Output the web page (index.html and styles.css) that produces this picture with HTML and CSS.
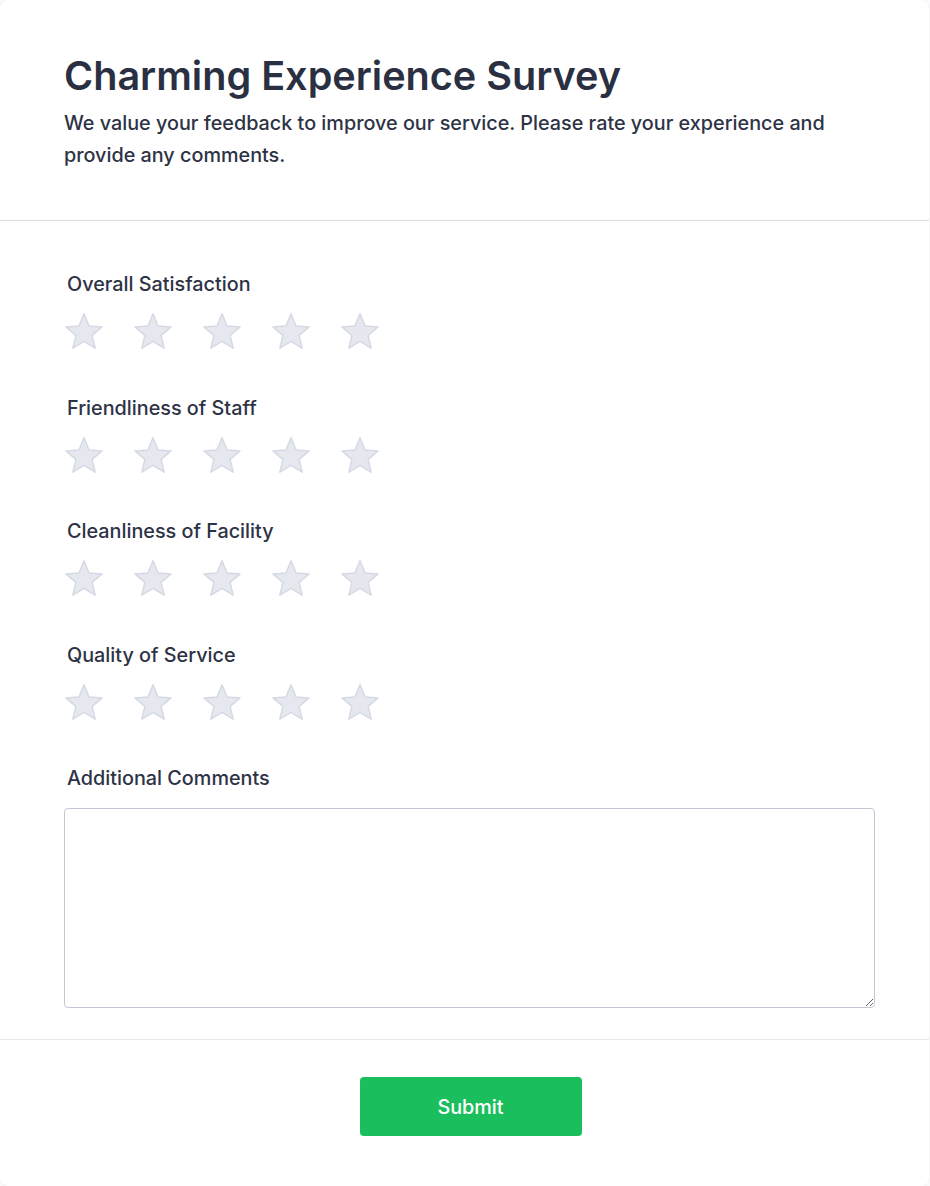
FILE: index.html
```html
<!DOCTYPE html>
<html lang="en">
<head>
<meta charset="utf-8">
<title>Charming Experience Survey</title>
<link rel="stylesheet" href="styles.css">
</head>
<body>
<div class="card">
  <header class="head">
    <h1 class="title">Charming Experience Survey</h1>
    <p class="desc">We value your feedback to improve our service. Please rate your experience and provide any comments.</p>
  </header>
  <main class="body">
    <div class="group">
      <label class="label">Overall Satisfaction</label>
      <div class="stars">
        <svg class="star" viewBox="0 0 40 38"><path d="M20 0.8 L25 12.92 L38.07 13.93 L28.08 22.43 L31.17 35.17 L20 28.3 L8.83 35.17 L11.92 22.43 L1.93 13.93 L15 12.92 Z"/></svg>
        <svg class="star" viewBox="0 0 40 38"><path d="M20 0.8 L25 12.92 L38.07 13.93 L28.08 22.43 L31.17 35.17 L20 28.3 L8.83 35.17 L11.92 22.43 L1.93 13.93 L15 12.92 Z"/></svg>
        <svg class="star" viewBox="0 0 40 38"><path d="M20 0.8 L25 12.92 L38.07 13.93 L28.08 22.43 L31.17 35.17 L20 28.3 L8.83 35.17 L11.92 22.43 L1.93 13.93 L15 12.92 Z"/></svg>
        <svg class="star" viewBox="0 0 40 38"><path d="M20 0.8 L25 12.92 L38.07 13.93 L28.08 22.43 L31.17 35.17 L20 28.3 L8.83 35.17 L11.92 22.43 L1.93 13.93 L15 12.92 Z"/></svg>
        <svg class="star" viewBox="0 0 40 38"><path d="M20 0.8 L25 12.92 L38.07 13.93 L28.08 22.43 L31.17 35.17 L20 28.3 L8.83 35.17 L11.92 22.43 L1.93 13.93 L15 12.92 Z"/></svg>
      </div>
    </div>
    <div class="group">
      <label class="label">Friendliness of Staff</label>
      <div class="stars">
        <svg class="star" viewBox="0 0 40 38"><path d="M20 0.8 L25 12.92 L38.07 13.93 L28.08 22.43 L31.17 35.17 L20 28.3 L8.83 35.17 L11.92 22.43 L1.93 13.93 L15 12.92 Z"/></svg>
        <svg class="star" viewBox="0 0 40 38"><path d="M20 0.8 L25 12.92 L38.07 13.93 L28.08 22.43 L31.17 35.17 L20 28.3 L8.83 35.17 L11.92 22.43 L1.93 13.93 L15 12.92 Z"/></svg>
        <svg class="star" viewBox="0 0 40 38"><path d="M20 0.8 L25 12.92 L38.07 13.93 L28.08 22.43 L31.17 35.17 L20 28.3 L8.83 35.17 L11.92 22.43 L1.93 13.93 L15 12.92 Z"/></svg>
        <svg class="star" viewBox="0 0 40 38"><path d="M20 0.8 L25 12.92 L38.07 13.93 L28.08 22.43 L31.17 35.17 L20 28.3 L8.83 35.17 L11.92 22.43 L1.93 13.93 L15 12.92 Z"/></svg>
        <svg class="star" viewBox="0 0 40 38"><path d="M20 0.8 L25 12.92 L38.07 13.93 L28.08 22.43 L31.17 35.17 L20 28.3 L8.83 35.17 L11.92 22.43 L1.93 13.93 L15 12.92 Z"/></svg>
      </div>
    </div>
    <div class="group">
      <label class="label">Cleanliness of Facility</label>
      <div class="stars">
        <svg class="star" viewBox="0 0 40 38"><path d="M20 0.8 L25 12.92 L38.07 13.93 L28.08 22.43 L31.17 35.17 L20 28.3 L8.83 35.17 L11.92 22.43 L1.93 13.93 L15 12.92 Z"/></svg>
        <svg class="star" viewBox="0 0 40 38"><path d="M20 0.8 L25 12.92 L38.07 13.93 L28.08 22.43 L31.17 35.17 L20 28.3 L8.83 35.17 L11.92 22.43 L1.93 13.93 L15 12.92 Z"/></svg>
        <svg class="star" viewBox="0 0 40 38"><path d="M20 0.8 L25 12.92 L38.07 13.93 L28.08 22.43 L31.17 35.17 L20 28.3 L8.83 35.17 L11.92 22.43 L1.93 13.93 L15 12.92 Z"/></svg>
        <svg class="star" viewBox="0 0 40 38"><path d="M20 0.8 L25 12.92 L38.07 13.93 L28.08 22.43 L31.17 35.17 L20 28.3 L8.83 35.17 L11.92 22.43 L1.93 13.93 L15 12.92 Z"/></svg>
        <svg class="star" viewBox="0 0 40 38"><path d="M20 0.8 L25 12.92 L38.07 13.93 L28.08 22.43 L31.17 35.17 L20 28.3 L8.83 35.17 L11.92 22.43 L1.93 13.93 L15 12.92 Z"/></svg>
      </div>
    </div>
    <div class="group">
      <label class="label">Quality of Service</label>
      <div class="stars">
        <svg class="star" viewBox="0 0 40 38"><path d="M20 0.8 L25 12.92 L38.07 13.93 L28.08 22.43 L31.17 35.17 L20 28.3 L8.83 35.17 L11.92 22.43 L1.93 13.93 L15 12.92 Z"/></svg>
        <svg class="star" viewBox="0 0 40 38"><path d="M20 0.8 L25 12.92 L38.07 13.93 L28.08 22.43 L31.17 35.17 L20 28.3 L8.83 35.17 L11.92 22.43 L1.93 13.93 L15 12.92 Z"/></svg>
        <svg class="star" viewBox="0 0 40 38"><path d="M20 0.8 L25 12.92 L38.07 13.93 L28.08 22.43 L31.17 35.17 L20 28.3 L8.83 35.17 L11.92 22.43 L1.93 13.93 L15 12.92 Z"/></svg>
        <svg class="star" viewBox="0 0 40 38"><path d="M20 0.8 L25 12.92 L38.07 13.93 L28.08 22.43 L31.17 35.17 L20 28.3 L8.83 35.17 L11.92 22.43 L1.93 13.93 L15 12.92 Z"/></svg>
        <svg class="star" viewBox="0 0 40 38"><path d="M20 0.8 L25 12.92 L38.07 13.93 L28.08 22.43 L31.17 35.17 L20 28.3 L8.83 35.17 L11.92 22.43 L1.93 13.93 L15 12.92 Z"/></svg>
      </div>
    </div>
    <div class="group">
      <label class="label label-comments" for="comments">Additional Comments</label>
      <textarea id="comments" class="comments"></textarea>
    </div>
  </main>
  <footer class="foot">
    <button class="submit" type="button">Submit</button>
  </footer>
</div>
</body>
</html>
```
FILE: styles.css
```css
* { box-sizing: border-box; }
html, body { margin: 0; padding: 0; background: #fbfbfd; }
body {
  font-family: Inter, "Noto Sans", "Liberation Sans", sans-serif;
  color: #2d3345;
}
.card {
  width: 929px;
  min-height: 1186px;
  background: #ffffff;
  border-radius: 8px;
  box-shadow: 0 0 2px rgba(40, 40, 80, 0.10);
}
.head {
  padding: 56px 54px 49px 64px;
  border-bottom: 1px solid #dedee9;
}
.title {
  margin: 0;
  font-size: 39.6px;
  line-height: 40px;
  font-weight: 600;
  color: #2a3042;
}
.desc {
  margin: 11px 0 0;
  font-size: 19.8px;
  line-height: 32px;
  font-weight: 500;
  color: #2d3345;
}
.body {
  padding: 49px 54px 31px 64px;
  display: flex;
  flex-direction: column;
  gap: 42.5px;
  border-bottom: 1px solid #e6e6ee;
}
.group {
  display: flex;
  flex-direction: column;
}
.label {
  display: block;
  margin-left: 3px;
  font-size: 19.8px;
  line-height: 28px;
  font-weight: 500;
  color: #2d3345;
  margin-bottom: 15px;
}
.label-comments { margin-bottom: 16px; }
.stars {
  display: flex;
  gap: 29px;
  height: 38px;
}
.star {
  width: 40px;
  height: 38px;
  display: block;
}
.star path {
  fill: #e6e8f0;
  stroke: #d6d9e4;
  stroke-width: 1.5;
  stroke-linejoin: round;
}
.comments {
  display: block;
  width: 811px;
  height: 200px;
  border: 1px solid #c3c6d4;
  border-radius: 4px;
  resize: vertical;
  font-family: inherit;
  font-size: 16px;
  padding: 8px 12px;
  margin: 0;
}
.foot {
  padding: 37px 52px 40px 64px;
  display: flex;
  justify-content: center;
}
.submit {
  width: 222px;
  height: 59px;
  border: none;
  border-radius: 4px;
  background: #1abe5d;
  color: #ffffff;
  font-family: inherit;
  font-size: 19.8px;
  font-weight: 500;
  cursor: pointer;
}
```
